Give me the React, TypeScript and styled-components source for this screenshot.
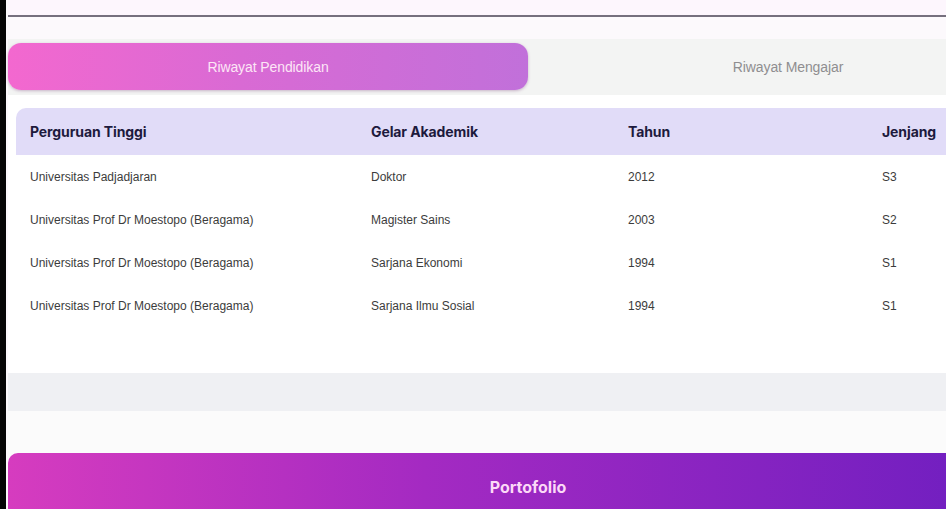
import React from "react";
import styled, { createGlobalStyle } from "styled-components";

const Global = createGlobalStyle`
  html, body { margin: 0; padding: 0; }
  body {
    background: #fcf9fc;
    overflow: hidden;
    font-family: "Liberation Sans", Arial, sans-serif;
  }
`;

const Page = styled.div`
  display: flex;
  width: 946px;
  height: 509px;
  overflow: hidden;
`;

const EdgeStrip = styled.div`
  flex: 0 0 6px;
  background: #050505;
`;

const Main = styled.main`
  flex: 0 0 1040px;
  width: 1040px;
  margin-left: 2px;
  display: flex;
  flex-direction: column;
  & > * {
    flex-shrink: 0;
  }
`;

const TopArea = styled.div`
  height: 15px;
  background: #fdf6fd;
`;

const Divider = styled.div`
  height: 2px;
  background: #76707e;
  margin-bottom: 22px;
`;

const TabList = styled.div`
  display: grid;
  grid-template-columns: 1fr 1fr;
  background: #f3f4f3;
  padding: 4px 0 5px;
`;

const Tab = styled.button<{ $active?: boolean }>`
  height: 47px;
  border: none;
  border-radius: 13px;
  font-family: "Liberation Sans", Arial, sans-serif;
  font-size: 14px;
  letter-spacing: -0.1px;
  cursor: pointer;
  background: ${(p) =>
    p.$active ? "linear-gradient(90deg, #f368cf 0%, #d96ad4 45%, #c170da 100%)" : "transparent"};
  color: ${(p) => (p.$active ? "#fde6f6" : "#8f8e90")};
  box-shadow: ${(p) => (p.$active ? "0 1px 3px rgba(120, 60, 120, 0.35)" : "none")};
`;

const Card = styled.section`
  background: #ffffff;
  padding: 13px 0 46px 8px;
`;

const Row = styled.div<{ $head?: boolean }>`
  display: grid;
  grid-template-columns: 341px 257px 254px 1fr;
  align-items: center;
  height: ${(p) => (p.$head ? "47px" : "43px")};
  background: ${(p) => (p.$head ? "#e1dcf8" : "transparent")};
  border-top-left-radius: ${(p) => (p.$head ? "10px" : "0")};
`;

const HeadCell = styled.div`
  padding-left: 14px;
  font-family: Inter, "Liberation Sans", sans-serif;
  font-weight: 700;
  font-size: 14px;
  letter-spacing: -0.1px;
  color: #1d1a3d;
`;

const Cell = styled.div`
  padding-left: 14px;
  font-size: 12px;
  color: #3c3c3c;
  padding-top: 1px;
`;

const GrayBand = styled.div`
  height: 38px;
  background: #eff0f3;
`;

const LightBand = styled.div`
  height: 42px;
  background: #fbfbfb;
`;

const PortfolioButton = styled.button`
  height: 70px;
  border: none;
  border-top-left-radius: 10px;
  border-top-right-radius: 10px;
  background: linear-gradient(90deg, #d63cbf 0%, #a42ac2 40%, #6a1dc0 100%);
  color: #fcd9f7;
  font-family: Inter, "Liberation Sans", sans-serif;
  font-weight: 700;
  font-size: 16px;
  padding: 0 0 2px;
  cursor: pointer;
`;

const data = [
  ["Universitas Padjadjaran", "Doktor", "2012", "S3"],
  ["Universitas Prof Dr Moestopo (Beragama)", "Magister Sains", "2003", "S2"],
  ["Universitas Prof Dr Moestopo (Beragama)", "Sarjana Ekonomi", "1994", "S1"],
  ["Universitas Prof Dr Moestopo (Beragama)", "Sarjana Ilmu Sosial", "1994", "S1"],
];

const headers = ["Perguruan Tinggi", "Gelar Akademik", "Tahun", "Jenjang"];

export default function App() {
  return (
    <>
      <Global />
      <Page>
        <EdgeStrip />
        <Main>
          <TopArea />
          <Divider />
          <TabList>
            <Tab $active>Riwayat Pendidikan</Tab>
            <Tab>Riwayat Mengajar</Tab>
          </TabList>
          <Card>
            <Row $head>
              {headers.map((h) => (
                <HeadCell key={h}>{h}</HeadCell>
              ))}
            </Row>
            {data.map((r, i) => (
              <Row key={i}>
                {r.map((c, j) => (
                  <Cell key={j}>{c}</Cell>
                ))}
              </Row>
            ))}
          </Card>
          <GrayBand />
          <LightBand />
          <PortfolioButton>Portofolio</PortfolioButton>
        </Main>
      </Page>
    </>
  );
}
